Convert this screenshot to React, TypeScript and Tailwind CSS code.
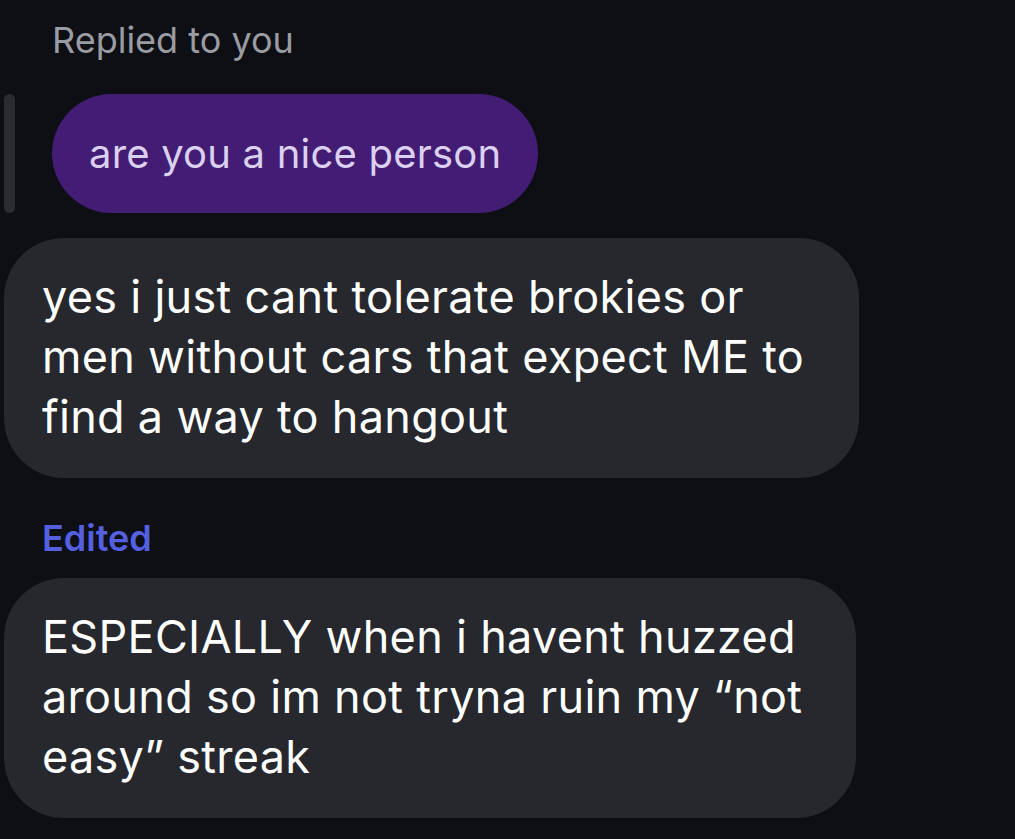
export default function App() {
  return (
    <div
      className="w-[1015px] h-[839px] overflow-hidden bg-[#0d0f14] text-white"
      style={{ fontFamily: 'Inter, "Liberation Sans", sans-serif' }}
    >
      <div className="pt-[18px] pl-[52px] text-[36px] leading-[44px] text-[#9a9ca3]">Replied to you</div>

      <div className="mt-[32px] flex items-stretch">
        <div className="ml-[4px] w-[11px] rounded-full bg-[#2a2c31]" />
        <div className="ml-[37px] h-[119px] flex items-center rounded-full bg-[#421d73] px-[37px]">
          <span className="text-[40px] tracking-[0.2px] text-[#dcd0f0]">are you a nice person</span>
        </div>
      </div>

      <div className="mt-[25px] ml-[4px] w-[855px] h-[240px] rounded-[60px] bg-[#26282d] pl-[38px] pt-[29px]">
        <p className="text-[45px] leading-[60px] tracking-[0.3px]">
          yes i just cant tolerate brokies or
          <br />
          men without cars that expect ME to
          <br />
          find a way to hangout
        </p>
      </div>

      <div className="mt-[38px] pl-[42px] text-[36px] leading-[44px] font-semibold text-[#5560e0]">Edited</div>

      <div className="mt-[18px] ml-[4px] w-[852px] h-[240px] rounded-[60px] bg-[#26282d] pl-[38px] pt-[29px]">
        <p className="text-[45px] leading-[60px] tracking-[0.3px]">
          ESPECIALLY when i havent huzzed
          <br />
          around so im not tryna ruin my “not
          <br />
          easy” streak
        </p>
      </div>
    </div>
  )
}
